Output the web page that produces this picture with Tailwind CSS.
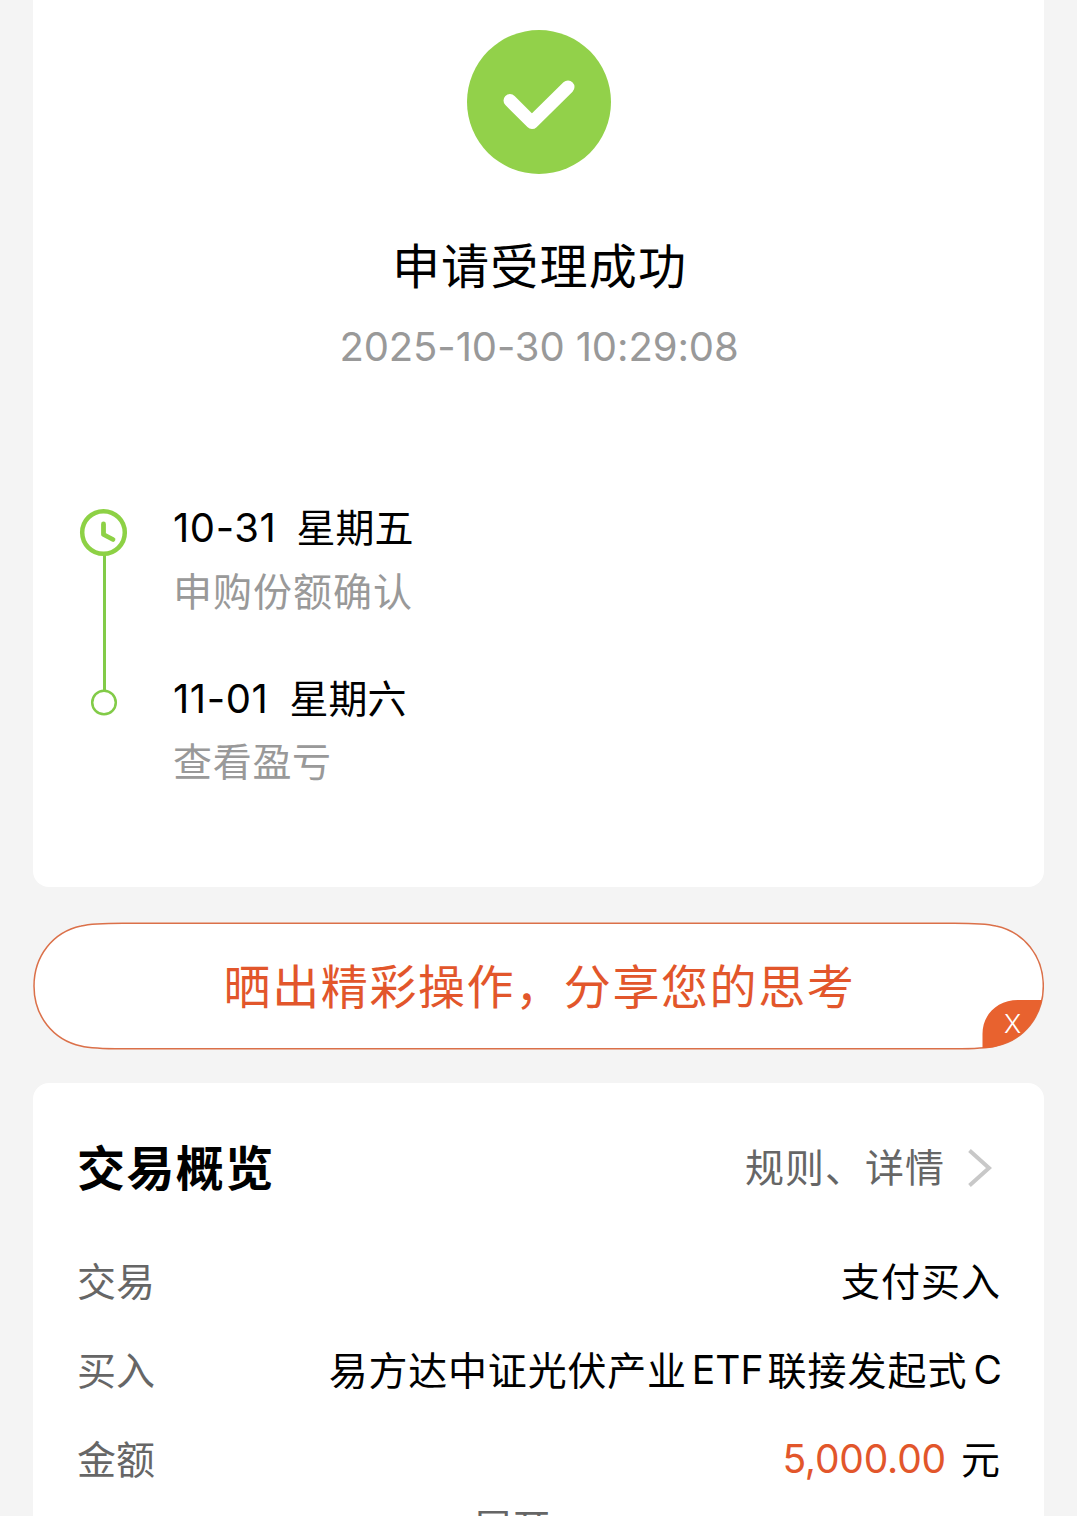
<!DOCTYPE html>
<html lang="zh-CN">
<head>
    <meta charset="UTF-8">
    <meta name="viewport" content="width=device-width, initial-scale=1.0">
    <title>申请受理成功</title>
    <script src="https://cdn.jsdelivr.net/npm/@tailwindcss/browser@4"></script>
</head>
<body class="h-[1516px] overflow-hidden bg-[#f4f4f4] font-['Inter','Noto_Sans_CJK_SC',sans-serif] text-black">

    <main class="mx-auto w-[1011px]">

        <!-- Result -->
        <section class="h-[887px] bg-white rounded-b-2xl pt-[30px]">
            <svg class="mx-auto block" width="144" height="144" viewBox="0 0 144 144" fill="none">
                <circle cx="72" cy="72" r="72" fill="#92d14a"/>
                <path d="M43 70.500L65 92.500L101 57" stroke="#fff" stroke-width="13" stroke-linecap="round" stroke-linejoin="round"/>
            </svg>
            <h1 class="mt-[59px] flex h-[66px] items-center justify-center pt-[2px] pl-[2px] text-[48px] tracking-[1.2px] font-normal whitespace-nowrap">申请受理成功</h1>
            <p class="mt-6 flex h-[50px] items-center justify-center pb-[2px] pl-px text-[40px] tracking-[-0.1px] text-[#999] whitespace-nowrap">2025-10-30 10:29:08</p>

            <!-- Timeline -->
            <div class="mt-[130px] flex pl-[46px]">
                <svg class="mt-[5px] shrink-0" width="50" height="210" viewBox="0 0 50 210" fill="none">
                    <path d="M25.500 46V182" stroke="#82cb48" stroke-width="3"/>
                    <circle cx="24.500" cy="24.500" r="21.300" stroke="#8dd145" stroke-width="4.500"/>
                    <path d="M24.500 16V26.500L34 31.500" stroke="#8dd145" stroke-width="4.800" stroke-linecap="round" stroke-linejoin="round"/>
                    <circle cx="25" cy="194.500" r="11.800" stroke="#82cb48" stroke-width="2.500" fill="#fff"/>
                </svg>
                <ol class="ml-11 whitespace-nowrap">
                    <li>
                        <div class="flex h-[50px] items-center text-[39px]"><span class="text-[40px] tracking-[0.6px]">10-31</span><span class="ml-5">星期五</span></div>
                        <div class="mt-[13px] flex h-[50px] items-center pt-[2px] text-[39px] tracking-[1px] text-[#999]">申购份额确认</div>
                    </li>
                    <li class="mt-[58px]">
                        <div class="flex h-[50px] items-center text-[39px]"><span class="text-[40px] tracking-[0.6px]">11-01</span><span class="ml-[21px]">星期六</span></div>
                        <div class="mt-[13px] flex h-[50px] items-center text-[39px] tracking-[0.7px] text-[#999]">查看盈亏</div>
                    </li>
                </ol>
            </div>
        </section>

        <!-- Share button -->
        <div class="relative mt-[35px] h-[128px]">
            <svg class="absolute inset-0" width="1011" height="128" viewBox="0 0 1011 128" fill="none">
                <path d="M90 1.200C72 1.200 58 1.500 48 4C20 10 1 34 1 64S20 118 48 124C58 126.500 72 126.800 90 126.800H921C939 126.800 953 126.500 963 124C991 118 1010.300 94 1010.300 64S991 10 963 4C953 1.500 939 1.200 921 1.200Z" fill="#fff" stroke="#db7049" stroke-width="1.500"/>
                <path d="M949.500 126V112C949.500 92 965 78 985 78H1009C1003 103 986 119 963 124.500C959 125.500 954 126 949.500 126Z" fill="#e8622f"/>
            </svg>
            <div class="relative flex h-full items-center justify-center pt-[3px] pl-[2px] text-[47px] tracking-[1.6px] text-[#e2562b] whitespace-nowrap">晒出精彩操作，分享您的思考</div>
            <span class="absolute left-[971px] top-[86px] text-[26px] leading-[32px] font-light text-white">X</span>
        </div>

        <!-- Overview -->
        <section class="h-[500px] mt-[33px] bg-white rounded-t-2xl px-[44px] pt-[52px]">
            <div class="flex h-[66px] items-center justify-between whitespace-nowrap">
                <h2 class="pt-[2px] text-[48px] tracking-[1.4px] font-bold">交易概览</h2>
                <div class="flex items-center pr-[7px] text-[39px] tracking-[1px] text-[#666]">
                    <span class="pt-px">规则、详情</span>
                    <svg class="ml-[22px]" width="26" height="40" viewBox="0 0 26 40" fill="none">
                        <path d="M2.500 2.500L22 20L2.500 37.500" stroke="#c8c8c8" stroke-width="4"/>
                    </svg>
                </div>
            </div>
            <dl class="mt-[55px] text-[39px] whitespace-nowrap">
                <div class="flex h-[50px] items-center justify-between">
                    <dt class="pt-[3px] text-[#666]">交易</dt>
                    <dd class="-mr-px pt-[3px] tracking-[1px]">支付买入</dd>
                </div>
                <div class="mt-[39px] flex h-[50px] items-center justify-between">
                    <dt class="pt-[3px] text-[#666]">买入</dt>
                    <dd class="-mr-[2px] flex items-center"><span class="pt-[2px] tracking-[0.8px]">易方达中证光伏产业</span><span class="ml-[5px]">ETF</span><span class="ml-1 pt-[2px] tracking-[1px]">联接发起式</span><span class="ml-[6px]">C</span></dd>
                </div>
                <div class="mt-[39px] flex h-[50px] items-center justify-between">
                    <dt class="pt-[3px] text-[#666]">金额</dt>
                    <dd class="flex items-center"><span class="pt-px tracking-[-0.2px] text-[#e2562b]">5,000.00</span><span class="ml-[15px] pt-[3px]">元</span></dd>
                </div>
            </dl>
            <div class="mt-[19px] flex h-[50px] items-center pl-[396px] pt-px text-[39px] text-[#666] whitespace-nowrap">展开</div>
        </section>
    </main>

</body>
</html>
